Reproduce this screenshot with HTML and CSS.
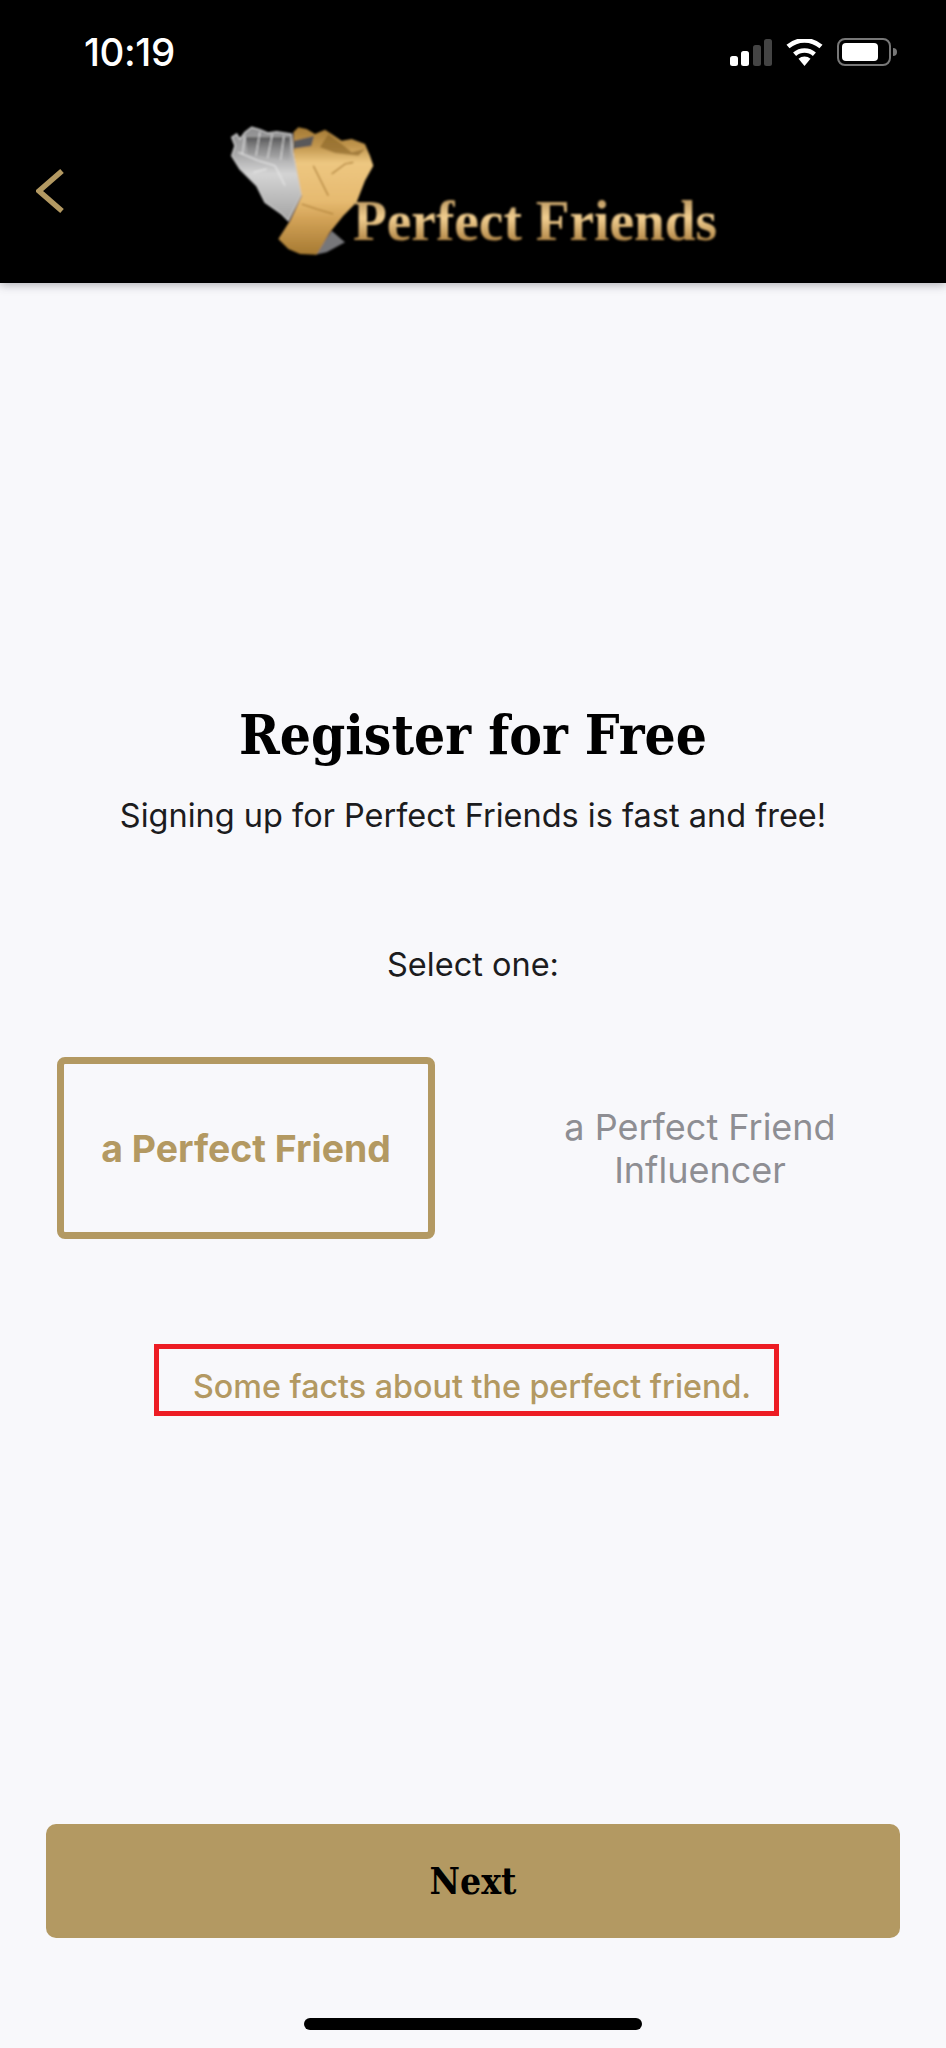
FILE: index.html
```html
<!DOCTYPE html>
<html lang="en">
<head>
<meta charset="utf-8">
<title>Register for Free</title>
<link rel="stylesheet" href="styles.css">
</head>
<body>
<div class="screen">
  <header class="header">
    <div class="status">
      <span class="time">10:19</span>
      <div class="status-icons">
        <svg class="signal" width="42" height="27" viewBox="0 0 42 27"><rect x="0" y="17" width="8" height="10" rx="2.5" fill="#fff"/><rect x="11" y="12" width="8" height="15" rx="2.5" fill="#fff"/><rect x="23" y="6" width="8" height="21" rx="2.5" fill="#444"/><rect x="34" y="0" width="8" height="27" rx="2.5" fill="#444"/></svg>
        <svg class="wifi" width="37" height="27" viewBox="0 0 37 27"><path d="M18.5 27l-6-7.2a9 9 0 0 1 12 0z" fill="#fff"/><path d="M8.6 15.2a15 15 0 0 1 19.8 0" fill="none" stroke="#fff" stroke-width="4.6"/><path d="M2 7.6a25 25 0 0 1 33 0" fill="none" stroke="#fff" stroke-width="4.6"/></svg>
        <svg class="battery" width="60" height="28" viewBox="0 0 60 28"><rect x="1" y="1" width="52" height="26" rx="7" fill="none" stroke="#777" stroke-width="2"/><rect x="5" y="5" width="36" height="18" rx="4" fill="#fff"/><path d="M56 10a4 4 0 0 1 0 8z" fill="#777"/></svg>
      </div>
    </div>
    <div class="nav">
      <svg class="back" width="30" height="46" viewBox="0 0 30 46"><path d="M26 3L3 23l23 20" fill="none" stroke="#b39962" stroke-width="5.5"/></svg>
      <svg class="logo" width="510" height="150" viewBox="0 0 510 150">
        <defs>
          <linearGradient id="silver" x1="0" y1="0" x2="0" y2="1"><stop offset="0" stop-color="#8d8d8e"/><stop offset=".3" stop-color="#a9a9aa"/><stop offset=".5" stop-color="#d4d4d4"/><stop offset="1" stop-color="#a4a4a4"/></linearGradient>
          <linearGradient id="fingers" x1="0" y1="0" x2="0" y2="1"><stop offset="0" stop-color="#565657"/><stop offset="1" stop-color="#9c9c9d" stop-opacity=".2"/></linearGradient>
          <linearGradient id="gold" x1="0" y1="0" x2="0" y2="1"><stop offset="0" stop-color="#a47a34"/><stop offset=".15" stop-color="#c1964e"/><stop offset=".28" stop-color="#edc781"/><stop offset=".58" stop-color="#e6ba70"/><stop offset=".72" stop-color="#d2a257"/><stop offset="1" stop-color="#a67a32"/></linearGradient>
          <linearGradient id="goldText" x1="0" y1="0" x2="0" y2="1"><stop offset="0" stop-color="#a5814c"/><stop offset=".45" stop-color="#f0cd8f"/><stop offset=".8" stop-color="#b78c4c"/><stop offset="1" stop-color="#7b5a2a"/></linearGradient>
          <filter id="soft"><feGaussianBlur stdDeviation="0.9"/></filter>
        </defs>
        <g filter="url(#soft)">
          <g transform="scale(.3333)">
            <path d="M65 85L80 75 90 90 105 70 125 55 150 62 175 72 200 68 245 75 248 125 275 255 235 335 215 315 165 280 140 230 90 180 65 140 75 110z" fill="url(#silver)" stroke="#cfcfcf" stroke-width="4"/>
            <path d="M108 85L240 85 238 155 112 135z" fill="url(#fingers)"/>
            <path d="M105 80l-8 55M150 68l-12 72M187 75l-14 72M222 80l-10 72" stroke="#e4e4e4" stroke-width="3" fill="none"/>
            <path d="M85 130l60 25 50 15 30 60M130 190l40-10" stroke="#eee" stroke-width="3" fill="none"/>
            <path d="M365 365L405 400 350 430 315 437z" fill="#77777a"/>
            <path d="M250 70L265 55 290 60 315 75 345 62 365 75 395 95 425 90 465 105 480 140 490 170 465 215 440 280 400 320 360 370 320 437 270 435 235 420 205 390 240 335 275 260 250 130z" fill="url(#gold)"/>
            <path d="M252 95l60-14-8 30-54 8z" fill="#59585a"/>
            <path d="M330 115l25-40 40 30 30 25 40-10-20 20-70-8z" fill="#8a6528" opacity=".65"/>
            <path d="M365 195l40-30 25-5M310 170l45 90M275 285l45 15 50 15" stroke="#a8792f" stroke-width="3.5" fill="none"/>
          </g>
          <text class="logo-text" x="143" y="131" textLength="364" lengthAdjust="spacingAndGlyphs" fill="url(#goldText)">Perfect Friends</text>
        </g>
      </svg>
    </div>
  </header>
  <main class="main">
    <h1 class="title">Register for Free</h1>
    <p class="subtitle">Signing up for Perfect Friends is fast and free!</p>
    <p class="select">Select one:</p>
    <div class="options">
      <div class="option option-active">a Perfect Friend</div>
      <div class="option option-plain">a Perfect Friend<br>Influencer</div>
    </div>
    <div class="facts">Some facts about the perfect friend.</div>
    <button class="next" type="button">Next</button>
    <div class="home"></div>
  </main>
</div>
</body>
</html>
```
FILE: styles.css
```css
* { box-sizing: border-box; }
html, body { margin: 0; padding: 0; }
body { background: #f8f8fb; font-family: Inter, "Liberation Sans", sans-serif; }
.screen { width: 946px; height: 2048px; display: flex; flex-direction: column; overflow: hidden; }

.header { height: 283px; background: #000; box-shadow: 0 2px 9px rgba(60,60,70,.38); flex: none; }
.status { height: 110px; padding: 30px 49px 0 84px; display: flex; justify-content: space-between; align-items: flex-start; }
.time { color: #fff; font-size: 38.5px; line-height: 44px; font-weight: 500; letter-spacing: -.4px; }
.status-icons { display: flex; align-items: center; gap: 14px; padding-top: 8px; }
.nav { display: flex; align-items: flex-start; padding-left: 36px; height: 173px; }
.back { margin-top: 58px; flex: none; }
.logo { margin-left: 144px; margin-top: -1px; flex: none; }
.logo-text { font-family: "Liberation Serif", serif; font-weight: 700; font-size: 56px; }

.main { flex: 1; display: flex; flex-direction: column; align-items: center; }
.title { margin: 416px 0 0; height: 72px; font-family: "DejaVu Serif", "Liberation Serif", serif; font-stretch: condensed; font-weight: 700; font-size: 54.5px; line-height: 72px; color: #000; text-align: center; white-space: nowrap; }
.subtitle { margin: 23px 0 0; font-size: 32.5px; line-height: 44px; color: #1c1c1e; }
.select { margin: 105px 0 0; font-size: 32.5px; line-height: 44px; color: #1c1c1e; }
.options { margin-top: 70px; width: 100%; padding-left: 57px; display: flex; align-items: center; }
.option { text-align: center; }
.option-active { width: 378px; height: 182px; border: 7px solid #b39962; border-radius: 8px; display: flex; align-items: center; justify-content: center; font-size: 37.4px; font-weight: 700; color: #b39962; }
.option-plain { width: 378px; margin-left: 76px; padding-top: 2px; font-size: 36px; line-height: 43px; color: #8e8e93; }
.facts { margin: 105px 0 0 154px; width: 625px; height: 72px; border: 5px solid #ed1c24; padding: 18px 0 0 34px; font-size: 32.25px; line-height: 40px; font-weight: 500; color: #b39962; white-space: nowrap; align-self: flex-start; }
.next { margin-top: 408px; width: 854px; height: 114px; border: 0; border-radius: 10px; background: #b39962; font-family: "DejaVu Serif", "Liberation Serif", serif; font-stretch: condensed; font-weight: 700; font-size: 37px; color: #000; flex: none; }
.home { margin-top: 80px; width: 338px; height: 12px; border-radius: 6px; background: #000; flex: none; }
```
